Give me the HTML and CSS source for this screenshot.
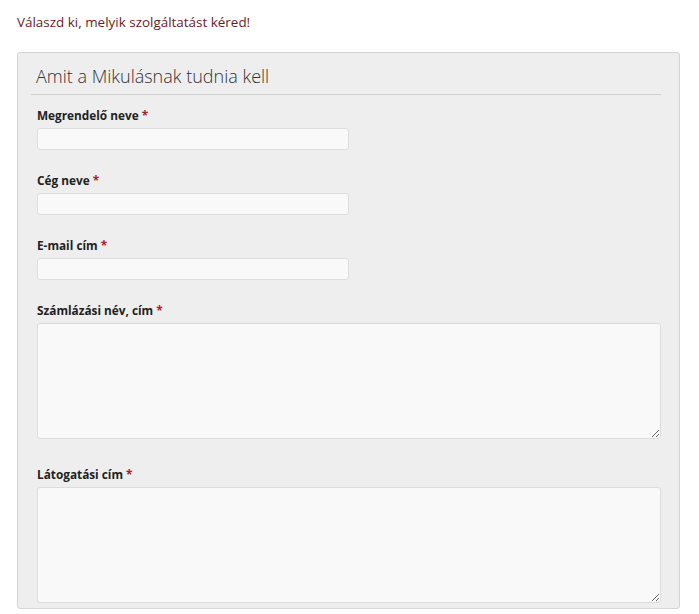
FILE: index.html
```html
<!DOCTYPE html>
<html lang="hu">
<head>
<meta charset="utf-8">
<link rel="stylesheet" href="styles.css">
</head>
<body>
<p class="intro">Válaszd ki, melyik szolgáltatást kéred!</p>
<form class="box">
  <div class="legend">Amit a Mikulásnak tudnia kell</div>
  <div class="fields">
    <div class="field">
      <label>Megrendelő neve <span class="req">*</span></label>
      <input type="text" class="inp">
    </div>
    <div class="field">
      <label>Cég neve <span class="req">*</span></label>
      <input type="text" class="inp">
    </div>
    <div class="field">
      <label>E-mail cím <span class="req">*</span></label>
      <input type="text" class="inp">
    </div>
    <div class="field">
      <label>Számlázási név, cím <span class="req">*</span></label>
      <textarea class="area"></textarea>
    </div>
    <div class="field">
      <label>Látogatási cím <span class="req">*</span></label>
      <textarea class="area"></textarea>
    </div>
  </div>
</form>
</body>
</html>
```
FILE: styles.css
```css
html, body {
  margin: 0;
  padding: 0;
  background: #fff;
}
body {
  font-family: "Open Sans", "Liberation Sans", sans-serif;
  padding: 0 19px 0 17px;
}
.intro {
  margin: 0;
  padding-top: 12px;
  font-size: 13.45px;
  line-height: 20px;
  color: #6b1d1d;
}
.box {
  margin-top: 20px;
  background: #eeeeee;
  border: 1px solid #d4d4d4;
  border-radius: 3px;
  padding: 0 18px 0 13px;
}
.legend {
  font-weight: 300;
  font-size: 18px;
  color: #333;
  line-height: 24px;
  padding: 11px 0 6px 5px;
  border-bottom: 1px solid #cfcfcf;
}
.fields {
  padding: 11px 0 0 6px;
  display: flex;
  flex-direction: column;
  gap: 21px;
}
.field {
  display: flex;
  flex-direction: column;
  align-items: flex-start;
}
.field label {
  font-weight: 700;
  font-size: 11.8px;
  line-height: 17px;
  color: #222;
  padding-top: 1px;
  margin-bottom: 4px;
}
.req {
  color: #a32424;
}
.inp {
  box-sizing: border-box;
  width: 312px;
  height: 22px;
  margin: 0;
  background: #f9f9f9;
  border: 1px solid #dedede;
  border-radius: 3px;
  outline: none;
}
.area {
  box-sizing: border-box;
  width: 624px;
  height: 116px;
  margin: 0 0 5px;
  background: #f9f9f9;
  border: 1px solid #dcdcdc;
  border-radius: 3px;
  resize: both;
  outline: none;
}
```
